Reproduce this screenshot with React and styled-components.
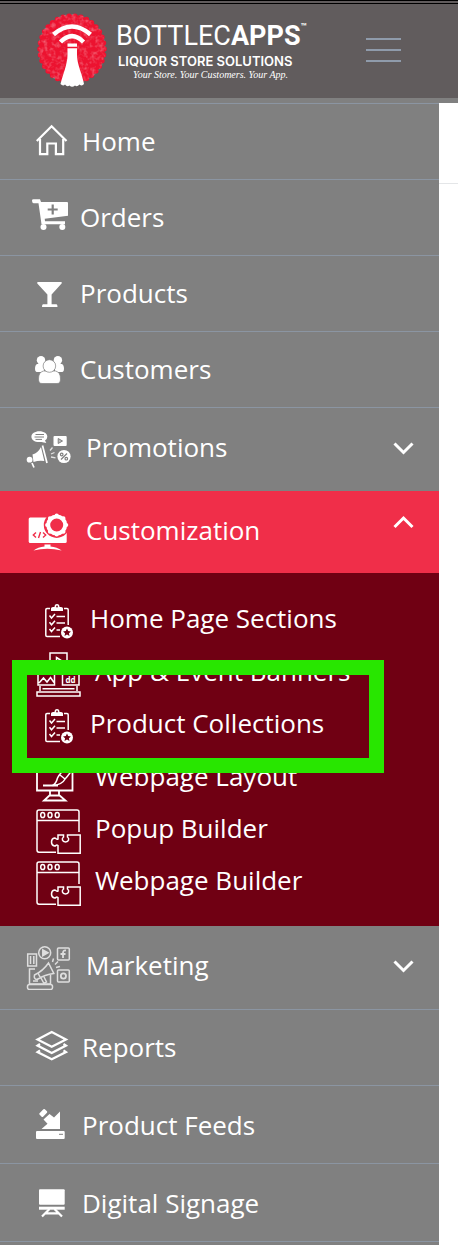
import React, { useState } from "react";
import styled, { createGlobalStyle } from "styled-components";

const GlobalStyle = createGlobalStyle`
  * {
    box-sizing: border-box;
  }

  body {
    margin: 0;
    background: #fff;
    font-family: "Open Sans", "Noto Sans", sans-serif;
  }
`;

const Page = styled.div`
  display: flex;
  flex-direction: column;
  min-height: 100vh;
`;

const Header = styled.header`
  display: flex;
  align-items: center;
  height: 103px;
  padding: 0 57px 3px 36px;
  background: #615c5d;
  border-top: 4px double #000;
  border-bottom: 5px solid #808080;
`;

const Brand = styled.a`
  display: flex;
  align-items: center;
  gap: 8px;
  color: #fff;
  text-decoration: none;
`;

const BrandText = styled.div`
  display: flex;
  flex-direction: column;
  white-space: nowrap;
`;

const BrandName = styled.div`
  display: flex;
  align-items: flex-start;
  font-family: Roboto, "Liberation Sans", sans-serif;
  font-size: 27px;
  line-height: 34px;

  sup {
    font-size: 10px;
    font-weight: bold;
    line-height: 16px;
  }
`;

const BrandSub = styled.div`
  padding-left: 2px;
  font-family: Inter, sans-serif;
  font-size: 13px;
  font-weight: 600;
  line-height: 16px;
`;

const Tagline = styled.div`
  padding-left: 17px;
  font-family: "Liberation Serif", serif;
  font-size: 10px;
  font-style: italic;
  line-height: 12px;
`;

const MenuButton = styled.button`
  display: flex;
  flex-direction: column;
  gap: 9px;
  width: 35px;
  margin-left: auto;
  padding: 0;
  background: none;
  border: none;
  cursor: pointer;
`;

const MenuBar = styled.span`
  height: 2px;
  width: 100%;
  background: #8f9bab;
`;

const Body = styled.div`
  flex: 1;
  display: grid;
  grid-template-columns: 1fr 19px;
`;

const Sidebar = styled.nav`
  background: #808080;
  border-top: 1px solid #8b95a2;
`;

const Content = styled.main`
  background: #fff;
`;

const ContentBar = styled.div`
  height: 81px;
  border-bottom: 1px solid #e4e6e8;
`;

const List = styled.ul`
  list-style: none;
  margin: 0;
  padding: 0;
`;

const Item = styled.li`
  border-bottom: ${(p) => (p.$line ? "1px solid #8b95a2" : "none")};
`;

const NavLink = styled.a`
  display: flex;
  align-items: center;
  gap: ${(p) => p.$gap}px;
  height: ${(p) => p.$height}px;
  padding: 0 24px ${(p) => (p.$height > 75 ? 0 : 2)}px;
  color: #fff;
  font-size: 26px;
  text-decoration: none;
`;

const GroupButton = styled.button`
  display: flex;
  align-items: center;
  gap: 10px;
  width: 100%;
  height: ${(p) => (p.$open ? 82 : 83)}px;
  padding: 0 23px 5px 24px;
  background: ${(p) => (p.$open ? "#f02e49" : "transparent")};
  border: none;
  color: #fff;
  font-family: inherit;
  font-size: 26px;
  text-align: left;
  cursor: pointer;
`;

const GroupLabel = styled.span`
  flex: 1;
`;

const Icon = styled.svg`
  flex: none;
  width: 52px;
  height: 49px;
  fill: #fff;
`;

const ChevronIcon = styled.svg`
  flex: none;
  width: 24px;
  height: 32px;
  fill: none;
  stroke: #fff;
  stroke-width: 3;
`;

const SubMenu = styled.div`
  position: relative;
  padding: 22px 0 17px;
  background: #700013;
`;

const SubLink = styled.a`
  display: flex;
  align-items: center;
  gap: ${(p) => (p.$small ? 9 : 14)}px;
  height: ${(p) => (p.$small ? 53 : 52)}px;
  padding-left: 36px;
  color: #fff;
  font-size: 26px;
  text-decoration: none;
`;

const SubLabel = styled.span`
  padding-bottom: 7px;
`;

const SubIcon = styled.svg`
  flex: none;
  width: 45px;
  height: 45px;
  fill: none;
  stroke: #fff;
  stroke-width: 1.5;
`;

const Highlight = styled.div`
  position: absolute;
  top: 87px;
  left: 12px;
  right: 55px;
  height: 113px;
  border: 15px solid #28e600;
  pointer-events: none;
`;

const BadgeSvg = styled.svg`
  flex: none;
  width: 72px;
  height: 76px;
`;

const Badge = () => (
  <BadgeSvg viewBox="0 0 72 76" aria-hidden="true">
    <defs>
      <filter id="grain" x="0" y="0" width="100%" height="100%">
        <feTurbulence type="fractalNoise" baseFrequency="0.25" numOctaves="3" seed="4" />
        <feColorMatrix values="0 0 0 0 1  0 0 0 0 1  0 0 0 0 1  2.4 0 0 0 -1.05" />
        <feComposite in2="SourceGraphic" operator="in" />
      </filter>
    </defs>
    <ellipse cx="36" cy="37" rx="33" ry="34" fill="#ec1330" />
    <ellipse
      cx="36"
      cy="37"
      rx="32"
      ry="33"
      fill="none"
      stroke="#ec1330"
      strokeWidth="5.5"
      strokeLinecap="round"
      pathLength="34"
      strokeDasharray="0 1"
    />
    <ellipse cx="36" cy="37" rx="34" ry="35" filter="url(#grain)" opacity="0.3" />
    <g fill="none" stroke="#fff" strokeWidth="4.5">
      <path d="M17.5 22.5Q36 6.5 54.5 22.5" />
      <path d="M24.5 30Q36 18.5 47.5 30" />
    </g>
    <path
      d="M31.5 31.5H41V43C41 52 46 62 48 72Q46 74.500 43.500 72.500Q41 75.500 39 73.500Q36 76 33.500 73.500Q31 75.500 29 72.500Q27 74.500 24.500 72C27 62 31.500 52 31.500 43Z"
      fill="#fff"
    />
    <path d="M31 35.500H41.500" stroke="#ec1330" strokeWidth="1.500" />
  </BadgeSvg>
);

const HomeIcon = () => (
  <Icon viewBox="0 0 52 49">
    <g fill="none" stroke="#fff" strokeWidth="2.2">
      <path d="M12.800 25L27.600 10.300L42.500 25" />
      <path d="M16 23V38.200H23.300V27.500H31.900V38.200H39.200V23" />
    </g>
  </Icon>
);

const OrdersIcon = () => (
  <Icon viewBox="0 0 52 49">
    <path d="M8 8.500Q8 7.200 9.500 7.200H16L17 10H43Q44 10 44 11V23.700L20.700 26.700L21 29.300H41V32.300H17.500L14.500 11.200H9.500Q8 11 8 8.500Z" />
    <circle cx="19.500" cy="35" r="3" />
    <circle cx="38.300" cy="35" r="3" />
    <path d="M28.700 12.500V22.500M23.700 17.500H33.700" stroke="#808080" strokeWidth="2.200" />
  </Icon>
);

const ProductsIcon = () => (
  <Icon viewBox="0 0 52 49">
    <path d="M14 14H37Q38.600 14 37.600 15.500L27.600 26.500V36.300H32.500Q33.500 36.500 33.500 39H18Q18 36.500 19 36.300H23.400V26.500L13.300 15.500Q12.600 14 14 14Z" />
  </Icon>
);

const CustomersIcon = () => (
  <Icon viewBox="0 0 52 49">
    <circle cx="17" cy="16.300" r="4.200" />
    <circle cx="33.900" cy="16.300" r="4.200" />
    <path d="M13 20H20V28H12.500Q11 27.500 11 25Q11 21 13 20ZM31 20H38Q40 21 40 25Q40 27.500 38.500 28H31Z" />
    <g stroke="#808080" strokeWidth="0.700">
      <path d="M19.500 27H31.500Q36.500 28 36.500 35Q36.500 39.500 33 39.500H18Q14.500 39.500 14.500 35Q14.500 28 19.500 27Z" />
      <circle cx="25.400" cy="22" r="6.300" />
    </g>
  </Icon>
);

const PromotionsIcon = () => (
  <Icon viewBox="0 0 52 49">
    <path d="M15.300 8.200C20 8.200 23.300 10.500 23.300 13.700Q23.300 16 21 17.500L22.300 20L17.500 19C11 19.700 7.400 17 7.400 13.700C7.400 10.500 11 8.200 15.300 8.200Z" />
    <path d="M11.500 11.500H20M10.500 14H20M11.500 16.400H18" stroke="#808080" strokeWidth="1" />
    <rect x="29.500" y="13" width="13.200" height="10" rx="1" />
    <path d="M34.200 15.500L38.500 18L34.200 20.500Z" fill="#bbb" stroke="#808080" />
    <path d="M8.500 31.500Q14 30 17 24L20.300 38Q15 37 9.500 39Z" />
    <path d="M18.500 22.500L23 40M8 40L10 44.500" stroke="#fff" strokeWidth="1.700" />
    <circle cx="5.600" cy="36.700" r="2.900" />
    <path d="M26 27.500L28.500 24.500M27 31L30.500 29.500M27 34L31.500 34.800" stroke="#e4e4e4" strokeWidth="1.300" />
    <circle cx="40" cy="33.500" r="6.600" />
    <g fill="none" stroke="#808080" strokeWidth="1.200">
      <path d="M37 36.500L43 30.500" />
      <circle cx="37.700" cy="31.500" r="1.300" />
      <circle cx="42.300" cy="35.700" r="1.300" />
    </g>
  </Icon>
);

const CustomizationIcon = () => (
  <Icon viewBox="0 0 52 49">
    <rect x="4.700" y="12.500" width="38" height="25.500" rx="1.500" />
    <circle cx="32.700" cy="20" r="12.900" fill="#f02e49" />
    <circle cx="32.700" cy="20" r="8.500" fill="none" stroke="#fff" strokeWidth="4" />
    <circle
      cx="32.700"
      cy="20"
      r="9.500"
      fill="none"
      stroke="#fff"
      strokeWidth="4.200"
      strokeLinecap="round"
      pathLength="8"
      strokeDasharray="0 1"
    />
    <path
      d="M12 27.500L9.300 30L12 32.500M16.500 27L14.500 33M19 27.500L21.700 30L19 32.500"
      fill="none"
      stroke="#f02e49"
      strokeWidth="1.400"
    />
    <path d="M20.500 39.500H26.500V41.500Q33 42 37.700 45.500Q23 42 9.500 45.500Q14 42 20.500 41.500Z" />
  </Icon>
);

const MarketingIcon = () => (
  <Icon viewBox="0 0 52 49">
    <g fill="none" stroke="#dedede" strokeWidth="1.500">
      <rect x="3.700" y="13" width="8.800" height="12" />
      <path d="M6.500 15V23M9.800 15V23" />
      <circle cx="20.700" cy="11.800" r="6" />
      <path d="M18.800 8.800L24 11.800L18.800 14.800Z" fill="#dedede" />
      <rect x="33.500" y="7" width="11.800" height="12" rx="1" />
      <path d="M42 9.500Q39 9 39 12V17M36.500 13H41.500" strokeWidth="1.800" />
      <rect x="33.500" y="29" width="11.800" height="12" rx="1" />
      <circle cx="39.400" cy="35" r="2.600" strokeWidth="1.800" />
      <path d="M11 28H5.500V43H26.500V34" />
      <rect x="3.500" y="43.500" width="25" height="5" rx="2" />
      <path d="M10.500 34Q19 30 24.500 22L29.800 32.500Q21 33.500 13 38.500Q9.500 38 10.500 34ZM14 32L16.500 37M17 37L20 42.500L22.500 41L20 36" />
      <path d="M28.500 21L29.500 17.500M31 23.500L34 20.500M32 26.500L36 25.500M9 40H14" />
    </g>
  </Icon>
);

const ReportsIcon = () => (
  <Icon viewBox="0 0 52 49">
    <g fill="none" stroke="#fff" strokeWidth="2.200">
      <path d="M27.700 10L42 17.400L27.700 24.800L13.500 17.400Z" />
      <path d="M16 22L13.500 23.600L27.700 31L42 23.600L39.500 22M16 28.300L13.500 30L27.700 37.300L42 30L39.500 28.300" />
    </g>
  </Icon>
);

const FeedsIcon = () => (
  <Icon viewBox="0 0 52 49">
    <path d="M36 11.500V29H17.500L23.500 23.800L19.500 19.500L25.500 14L30 17.500Z" />
    <rect x="15.500" y="10.500" width="7.500" height="5" rx="1" transform="rotate(-45 19.200 13)" />
    <rect x="12" y="31" width="28.700" height="8" rx="1" />
    <path d="M35 34.300H39" stroke="#808080" />
  </Icon>
);

const SignageIcon = () => (
  <Icon viewBox="0 0 52 49">
    <rect x="15" y="11.300" width="25.700" height="15.500" rx="1" />
    <rect x="15" y="28.700" width="25.700" height="3" />
    <path d="M25.500 31L18 38.500M30.500 31L38 38.500M21 35.300H35" fill="none" stroke="#fff" strokeWidth="2.200" />
  </Icon>
);

const ClipboardIcon = () => (
  <SubIcon viewBox="0 0 45 45">
    <path d="M14 9.500H11Q9.800 9.500 9.800 10.700V36.200Q9.800 37.400 11 37.400H24M28 9.500H31Q32.200 9.500 32.200 10.700V26" />
    <path d="M15 12V9.500Q15 8 17 8H18.500Q18.500 5 21 5Q23.500 5 23.500 8H25Q27 8 27 9.500V12Z" fill="#fff" stroke="none" />
    <circle cx="21" cy="7.500" r="0.900" fill="#700013" stroke="none" />
    <path d="M13.500 16.500L15.500 19L19 15M13.500 23.300L15.500 25.800L19 21.800M13.500 30L15.500 32.500L19 28.500M20.500 17.500H29M20.500 24H29M20.500 31H24" />
    <circle cx="31" cy="33.500" r="6" fill="#fff" stroke="none" />
    <path
      d="M31 29.500L32.200 32.100L35 32.400L32.900 34.300L33.500 37.100L31 35.600L28.500 37.100L29.100 34.300L27 32.400L29.800 32.100Z"
      fill="#700013"
      stroke="none"
    />
  </SubIcon>
);

const BannersIcon = () => (
  <SubIcon viewBox="0 0 45 45">
    <path d="M14 18V1H31V18M20.500 5.500L26 9L20.500 12.500ZM4 11H12M33 11H41" />
    <path d="M2 33V18H18.500V33ZM26.500 33V18H43V33ZM3 31L7.500 26L11 30L14.500 25.500L18 30.500" />
    <path d="M4 34V39M41 34V39M6.500 36.800H38.500M1 40H44V44H1Z" />
    <text
      x="29.500"
      y="30.500"
      fill="#fff"
      stroke="none"
      fontFamily="Open Sans, sans-serif"
      fontSize="8"
      fontWeight="bold"
    >
      dd
    </text>
  </SubIcon>
);

const LayoutIcon = () => (
  <SubIcon viewBox="0 0 45 45">
    <path d="M28 8H1V33.500H36.500V12M14 34V38L8 43.500H29.500L23 38V34M14 38.500H23M7 28.500H22" strokeWidth="1.800" />
    <path d="M16.500 28.500Q20 27 21.500 21Q24 15 40 2Q43 1 42 4Q33 18 29.500 21.500Q26 28 16.500 28.500ZM24 18L29 22" />
  </SubIcon>
);

const PuzzleIcon = () => (
  <SubIcon viewBox="0 0 45 45">
    <path d="M20 43.200H3Q1 43.200 1 41V3Q1 1 3 1H41Q43 1 43 3V23M1 11.500H43" />
    <ellipse cx="6.700" cy="6" rx="2" ry="2.600" />
    <ellipse cx="14" cy="6" rx="2" ry="2.600" />
    <ellipse cx="21.200" cy="6" rx="2" ry="2.600" />
    <path d="M22 44.200V36.500C20 35 20.500 37 18.500 37Q15.500 36.500 15.500 33Q15.500 29.500 18.500 29C20.500 29 20 31 22 30V26H27.500V28C25.500 29.500 26 33 29.500 33C33 33 33.500 29.500 31.500 28V26H44.200V44.200Z" />
  </SubIcon>
);

const Chevron = ({ up }) => (
  <ChevronIcon viewBox="0 0 24 32" aria-hidden="true">
    <path d={up ? "M2.500 13L11.500 4L20.500 13" : "M2.500 12.500L11.500 21.500L20.500 12.500"} />
  </ChevronIcon>
);

const subItems = [
  { label: "Home Page Sections", icon: ClipboardIcon, small: true },
  { label: "App & Event Banners", icon: BannersIcon },
  { label: "Product Collections", icon: ClipboardIcon, small: true },
  { label: "Webpage Layout", icon: LayoutIcon },
  { label: "Popup Builder", icon: PuzzleIcon },
  { label: "Webpage Builder", icon: PuzzleIcon },
];

const navItems = [
  { label: "Home", icon: HomeIcon, gap: 6, height: 75 },
  { label: "Orders", icon: OrdersIcon, gap: 4, height: 75 },
  { label: "Products", icon: ProductsIcon, gap: 4, height: 75 },
  { label: "Customers", icon: CustomersIcon, gap: 4, height: 75 },
  { label: "Promotions", icon: PromotionsIcon, group: true },
  { label: "Customization", icon: CustomizationIcon, group: true, items: subItems },
  { label: "Marketing", icon: MarketingIcon, group: true, line: true },
  { label: "Reports", icon: ReportsIcon, gap: 6, height: 75 },
  { label: "Product Feeds", icon: FeedsIcon, gap: 6, height: 77 },
  { label: "Digital Signage", icon: SignageIcon, gap: 6, height: 77 },
];

const App = () => {
  const [openGroup, setOpenGroup] = useState("Customization");

  const toggleGroup = (label) => {
    setOpenGroup((p) => (p === label ? "" : label));
  };

  return (
    <Page>
      <GlobalStyle />
      <Header>
        <Brand href="#">
          <Badge />
          <BrandText>
            <BrandName>
              <span>BOTTLEC</span>
              <b>APPS</b>
              <sup>™</sup>
            </BrandName>
            <BrandSub>LIQUOR STORE SOLUTIONS</BrandSub>
            <Tagline>Your Store. Your Customers. Your App.</Tagline>
          </BrandText>
        </Brand>
        <MenuButton type="button" aria-label="Toggle menu">
          <MenuBar />
          <MenuBar />
          <MenuBar />
        </MenuButton>
      </Header>
      <Body>
        <Sidebar>
          <List>
            {navItems.map(({ label, icon: ItemIcon, group, items, line, gap, height }) => {
              const open = openGroup === label;
              if (!group) {
                return (
                  <Item key={label} $line>
                    <NavLink href="#" $gap={gap} $height={height}>
                      <ItemIcon />
                      <span>{label}</span>
                    </NavLink>
                  </Item>
                );
              }
              return (
                <Item key={label} $line={line}>
                  <GroupButton
                    type="button"
                    $open={open}
                    aria-expanded={open}
                    onClick={() => toggleGroup(label)}
                  >
                    <ItemIcon />
                    <GroupLabel>{label}</GroupLabel>
                    <Chevron up={open} />
                  </GroupButton>
                  {open && items && (
                    <SubMenu>
                      <List>
                        {items.map(({ label: subLabel, icon: ChildIcon, small }) => (
                          <li key={subLabel}>
                            <SubLink href="#" $small={small}>
                              <ChildIcon />
                              <SubLabel>{subLabel}</SubLabel>
                            </SubLink>
                          </li>
                        ))}
                      </List>
                      <Highlight />
                    </SubMenu>
                  )}
                </Item>
              );
            })}
          </List>
        </Sidebar>
        <Content>
          <ContentBar />
        </Content>
      </Body>
    </Page>
  );
};

export default App;
